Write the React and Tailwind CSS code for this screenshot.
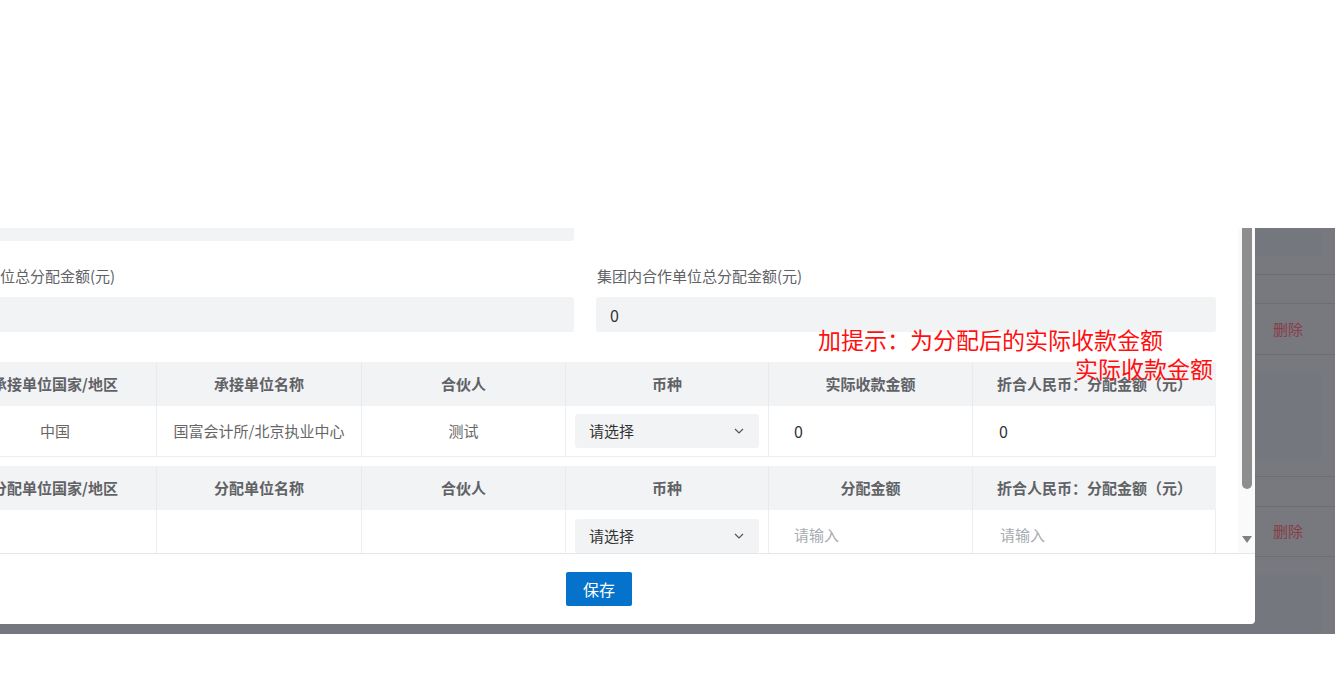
import React from "react";

const FONT = { fontFamily: '"Noto Sans CJK SC", "Noto Sans", "Liberation Sans", sans-serif' };

function Chevron() {
  return (
    <svg width="10" height="6" viewBox="0 0 10 6" className="shrink-0">
      <polyline points="1,1 5,5 9,1" fill="none" stroke="#555" strokeWidth="1.2" />
    </svg>
  );
}

function Select() {
  return (
    <div className="h-[34px] w-full bg-[#f2f3f5] rounded-[3px] flex items-center justify-between pl-[14px] pr-[15px] text-[15px] text-[#333]">
      <span>请选择</span>
      <Chevron />
    </div>
  );
}

const COLS = "grid grid-cols-[203px_205px_204px_203px_204px_243px]";

function HeaderRow({ cols }) {
  return (
    <div className={`${COLS} h-[44px] bg-[#f2f3f5]`}>
      {cols.map((c, i) => (
        <div
          key={i}
          className={`flex items-center justify-center whitespace-nowrap text-[15px] font-bold text-[#606266] ${i < cols.length - 1 ? "border-r border-[#e9eaee]" : ""}`}
        >
          {c}
        </div>
      ))}
    </div>
  );
}

function Cell({ children, last, className = "" }) {
  return (
    <div className={`flex items-center whitespace-nowrap border-r border-[#ebeef5] ${className}`}>
      {children}
    </div>
  );
}

export default function App() {
  return (
    <div className="w-[1335px] h-[681px] overflow-hidden bg-white" style={FONT}>
      <div className="h-[228px]" />
      <div className="relative h-[406px] bg-[#77797f] overflow-hidden">
        {/* background page (dimmed by overlay) */}
        <div className="flex flex-col">
          <div className="h-[1px]" />
          <div className="h-[27px] mr-[14px] bg-[#74777e]" />
          <div className="h-[19px] border-b border-[#6c6e74]" />
          <div className="h-[29px] border-b border-[#6c6e74]" />
          <div className="h-[51px] border-b border-[#6c6e74] flex items-center justify-end pr-[32px] text-[15px] text-[#8a3c47]">
            删除
          </div>
          <div className="h-[18px]" />
          <div className="h-[86px] mr-[14px] bg-[#74777e]" />
          <div className="h-[18px] border-b border-[#6c6e74]" />
          <div className="h-[30px] border-b border-[#6c6e74]" />
          <div className="h-[50px] border-b border-[#6c6e74] flex items-center justify-end pr-[32px] text-[15px] text-[#8a3c47]">
            删除
          </div>
          <div className="h-[18px]" />
          <div className="h-[80px] mr-[14px] bg-[#74777e]" />
        </div>

        {/* modal */}
        <div className="absolute top-0 left-[-57px] w-[1312px] h-[396px] bg-white rounded-br-[4px] flex flex-col">
          <div className="flex h-[325px]">
            <div className="flex-1 overflow-hidden pl-[11px] pr-[22px]">
              <div className="mt-[-22px] flex flex-col">
                <div className="grid grid-cols-[620px_620px] gap-x-[22px]">
                  <div className="h-[35px] bg-[#f2f3f5] rounded-[3px]" />
                  <div />
                </div>
                <div className="grid grid-cols-[620px_620px] gap-x-[22px] mt-[24px]">
                  <div className="h-[22px] pl-[1px] flex items-center text-[15px] text-[#606266] whitespace-nowrap">
                    承接单位总分配金额(元)
                  </div>
                  <div className="h-[22px] pl-[1px] flex items-center text-[15px] text-[#606266] whitespace-nowrap">
                    集团内合作单位总分配金额(元)
                  </div>
                </div>
                <div className="grid grid-cols-[620px_620px] gap-x-[22px] mt-[10px]">
                  <div className="h-[35px] bg-[#f2f3f5] rounded-[3px]" />
                  <div className="h-[35px] bg-[#f2f3f5] rounded-[3px] flex items-center pl-[14px] text-[16px] text-[#333]">
                    0
                  </div>
                </div>

                {/* table 1 */}
                <div className="mt-[30px]">
                  <HeaderRow cols={["承接单位国家/地区", "承接单位名称", "合伙人", "币种", "实际收款金额", "折合人民币：分配金额（元）"]} />
                  <div className={`${COLS} h-[51px] border-b border-[#ebeef5]`}>
                    <Cell className="justify-center text-[15px] text-[#666]">中国</Cell>
                    <Cell className="justify-center text-[15px] text-[#666]">国富会计所/北京执业中心</Cell>
                    <Cell className="justify-center text-[15px] text-[#666]">测试</Cell>
                    <Cell className="px-[9px]"><Select /></Cell>
                    <Cell className="pl-[25px] text-[16px] text-[#333]">0</Cell>
                    <Cell className="pl-[26px] text-[16px] text-[#333]">0</Cell>
                  </div>
                </div>

                {/* table 2 */}
                <div className="mt-[9px]">
                  <HeaderRow cols={["分配单位国家/地区", "分配单位名称", "合伙人", "币种", "分配金额", "折合人民币：分配金额（元）"]} />
                  <div className={`${COLS} h-[51px]`}>
                    <Cell />
                    <Cell />
                    <Cell />
                    <Cell className="px-[9px] items-start pt-[9px]"><Select /></Cell>
                    <Cell className="pl-[25px] text-[15px] text-[#a8abb2]">请输入</Cell>
                    <Cell className="pl-[27px] text-[15px] text-[#a8abb2]">请输入</Cell>
                  </div>
                </div>
              </div>
            </div>
            {/* scrollbar */}
            <div className="w-[17px] bg-[#fafafa] flex flex-col items-center pb-[10px]">
              <div className="w-[10px] h-[261px] bg-[#8e8e8e] rounded-b-full" />
              <div className="flex-1" />
              <svg width="10" height="7" viewBox="0 0 10 7">
                <polygon points="0,0 10,0 5,7" fill="#808080" />
              </svg>
            </div>
          </div>
          <div className="flex-1 border-t border-[#e6e6e6] flex justify-center pt-[18px]">
            <button className="w-[66px] h-[34px] bg-[#0572cc] rounded-[2px] text-white text-[16px] flex items-center justify-center">
              保存
            </button>
          </div>
        </div>

        {/* red annotation */}
        <div className="absolute left-[818px] top-[97px] text-[23px] leading-[29px] text-[#ff1010] whitespace-nowrap">
          加提示：为分配后的实际收款金额
        </div>
        <div className="absolute left-[1075px] top-[126px] text-[23px] leading-[29px] text-[#ff1010] whitespace-nowrap">
          实际收款金额
        </div>
      </div>
    </div>
  );
}
